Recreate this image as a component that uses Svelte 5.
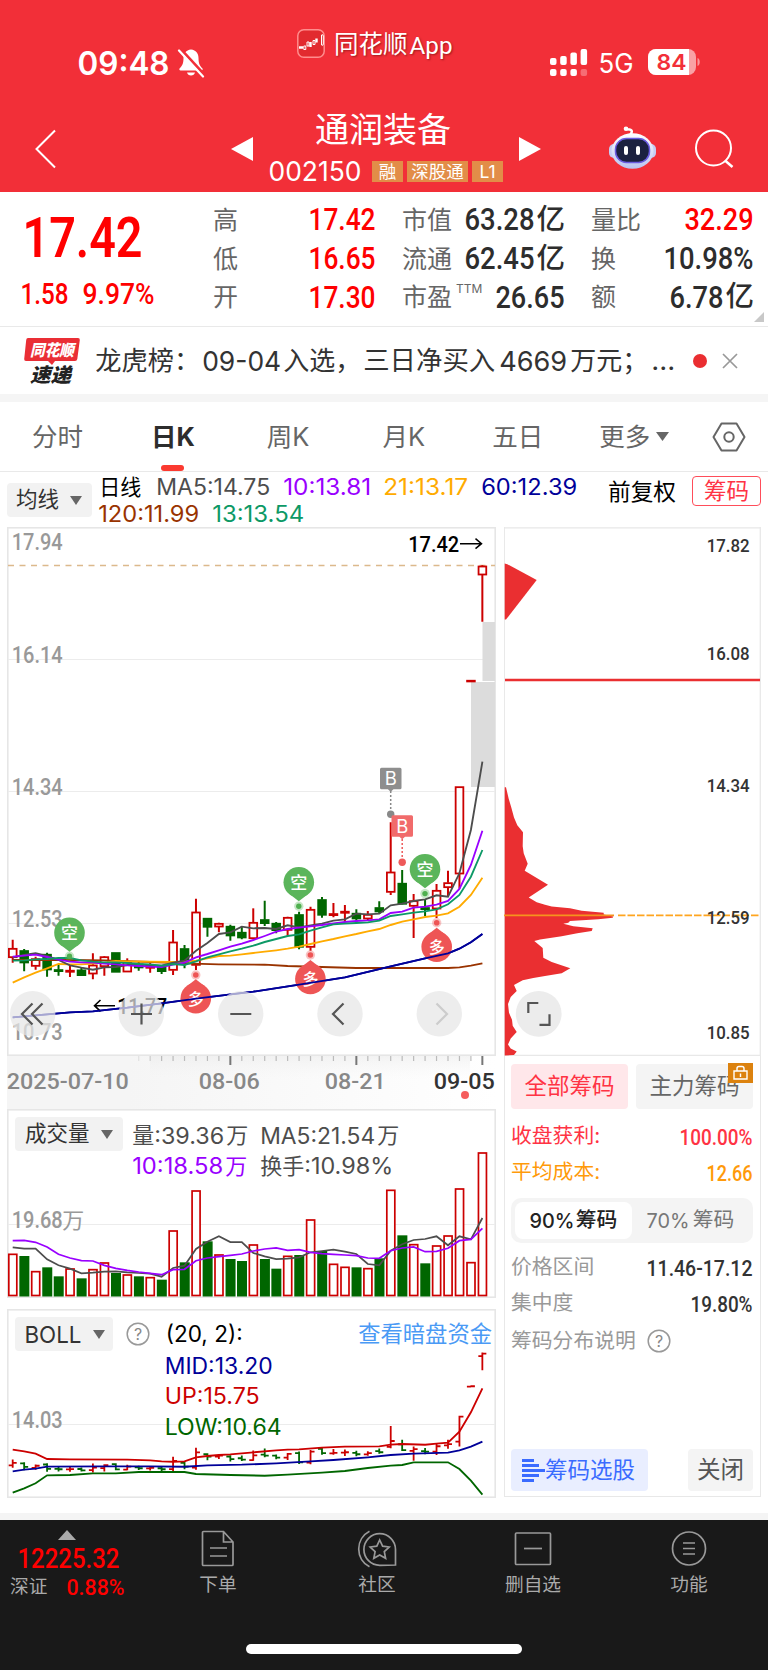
<script>
	const red = "#cc0000";
	const green = "#006600";

	const gap = 11.455;
	const x = i => 12.7 + gap * i;

	// [up?, high, body top, body bottom, low] in thirds of a pixel below y = 740
	const candles = [
		[1, 599, 625, 653, 668], [0, 627, 632, 667, 694], [1, 650, 656, 679, 689], [0, 638, 643, 688, 710],
		[0, 675, 689, 693, 707], [1, 677, 691, 695, 711], [0, 683, 690, 705, 708], [1, 640, 675, 702, 718],
		[1, 648, 650, 680, 707], [0, 638, 638, 695, 695], [1, 655, 665, 696, 696], [0, 665, 672, 682, 692],
		[1, 668, 678, 683, 698], [0, 675, 682, 693, 702], [1, 570, 606, 691, 705], [0, 615, 626, 665, 685],
		[1, 476, 516, 676, 690], [0, 534, 535, 560, 590], [1, 548, 550, 561, 577], [0, 554, 559, 586, 602],
		[0, 558, 577, 592, 598], [1, 505, 547, 596, 596], [0, 482, 539, 549, 558], [0, 546, 550, 570, 580],
		[1, 530, 532, 571, 587], [0, 515, 524, 620, 628], [1, 500, 508, 622, 632], [0, 471, 479, 524, 533],
		[1, 489, 521, 525, 532], [1, 495, 514, 518, 545], [0, 508, 520, 535, 548], [1, 513, 523, 537, 542],
		[0, 484, 503, 514, 522], [1, 247, 396, 457, 465], [0, 390, 430, 491, 493], [1, 462, 482, 499, 594],
		[0, 478, 503, 507, 528], [1, 432, 451, 507, 534], [1, 392, 428, 443, 470], [1, 140, 140, 402, 446],
		[1, -179, -179, -176, -176], [1, -524, -522, -495, -355]
	];
	const y = v => 740 + v / 3;
	const yBoll = v => 1403.3 + v * 0.0952;

	// a number is the next bar, a pair [i, v] jumps to bar i
	function path(list, fy) {
		let i = -1;
		return list.map(p => {
			const v = Array.isArray(p) ? p[1] : p;
			i = Array.isArray(p) ? p[0] : i + 1;
			return `${x(i).toFixed(1)},${fy(v).toFixed(1)}`;
		}).join(" ");
	}

	const averages = [
		{ color: "#993300", list: [660, [5, 660], [8, 661], [12, 666], [15, 670], [18, 673], [22, 674], [24, 678], [27, 681], [30, 684], [38, 684], 682, 677, 670] },
		{ color: "#000099", list: [832, [3, 823], [5, 817], [7, 814], [10, 803], [13, 790], [16, 776], [21, 755], [25, 734], [29, 712], [33, 679], [36, 655], [38, 640], 626, 607, 582] },
		{ color: "#ffab00", list: [728, 712, 698, 685, 672, 673, 673, 671, 668, 663, 664, [14, 666], 665, 662, 655, 648, 647, 643, 639, 635, 631, 626, 620, 612, 604, 597, 589, 582, 574, 567, 555, 545, 538, 531, 527, 520, 500, 465, 413] },
		{ color: "#4d4d4d", list: [652, 645, 640, 648, 660, 676, 683, 689, 682, 681, 675, 674, 676, 677, 668, 662, 632, 609, 582, 577, 560, 565, 564, 567, 556, 562, 556, 551, 542, 538, 521, 523, 521, 496, 491, 483, 478, 466, 470, 400, 270, 65] },
		{ color: "#9900ff", list: [650, 647, 644, 651, 659, 665, 667, 668, 671, 673, 676, 678, 680, 681, 674, 668, 652, 642, 631, 620, 611, 600, 588, 575, 567, 563, 559, 555, 550, 546, 543, 541, 538, 519, 515, 503, 500, 494, 483, 447, 375, 272] },
		{ color: "#0d9966", list: [662, 661, 658, 657, 654, 654, 661, 665, 667, 667, 669, 672, 673, 677, 672, 675, 664, 652, 643, 634, 626, 617, 606, 597, 588, 583, 572, 562, 553, 551, 549, 547, 542, 528, 523, 518, 514, 508, 493, 465, 410, 330] }
	];

	const yVol = v => 1045 + v / 3;
	const volumes = [628, 633, 680, 667, 694, 672, 700, 674, 654, 684, 690, 694, 698, 704, 558, 652, 438, 589, 630, 642, 648, 600, 642, 671, 634, 630, 525, 618, 658, 667, 667, 671, 640, 436, 571, 599, 655, 603, 573, 432, 653, 324];
	const volumeLines = [
		{ color: "#4d4d4d", list: [607, 611, 611, 643, 661, 671, 685, 683, 680, 679, 682, 684, 686, 695, 669, 662, 612, 590, 574, 591, 591, 624, 634, 642, 641, 637, 622, 618, 614, 620, 627, 657, 661, 617, 598, 585, 582, 574, 601, 574, 583, 519] },
		{ color: "#9900ff", list: [587, 586, 592, 606, 628, 639, 647, 648, 661, 670, 676, 681, 685, 689, 674, 673, 647, 639, 635, 631, 627, 618, 612, 609, 616, 614, 622, 626, 628, 630, 632, 639, 640, 617, 609, 606, 620, 619, 610, 587, 583, 550] }
	];

	const yBand = v => 1300 + v / 3;
	const bands = [
		{ color: "#cc0000", list: [449, 454, 461, 477, [5, 478], [10, 479], [12, 481], 484, 485, 484, 472, 468, 465, 463, 460, 457, [23, 451], 449, 448, [27, 443], [29, 440], [32, 439], 434, 432, [36, 434], 431, 428, 395, 337, 265] },
		{ color: "#000099", list: [514, 509, 506, 500, [8, 499], [12, 499], [15, 500], [17, 496], [20, 494], [23, 490], [26, 484], [28, 480], [31, 472], [33, 465], [35, 461], [38, 458], 451, 440, 425] },
		{ color: "#006600", list: [578, 565, 550, 526, [5, 525], [7, 520], [9, 520], [11, 516], [15, 516], 522, [19, 525], [22, 527], [24, 524], [27, 518], [29, 513], [31, 504], [33, 497], 495, 487, [38, 487], 507, 542, 584] }
	];

	// chip distribution outline, [x, y]
	const chips = [[44, 762], [48, 762], [56, 795], [64, 820], [72, 848], [82, 870], [99, 890], [98, 930], [101, 950], [113, 980], [104, 1000], [174, 1040], [116, 1076], [140, 1090], [165, 1097], [185, 1102], [240, 1107], [275, 1114], [341, 1120], [341, 1125], [370, 1130], [368, 1134], [325, 1138], [240, 1143], [235, 1148], [220, 1151], [250, 1158], [308, 1164], [305, 1172], [262, 1178], [215, 1187], [150, 1196], [133, 1200], [158, 1220], [160, 1248], [185, 1260], [241, 1278], [215, 1292], [165, 1300], [130, 1306], [98, 1312], [72, 1326], [80, 1343], [62, 1360], [54, 1380], [57, 1405], [66, 1425], [68, 1442], [80, 1460], [62, 1478], [54, 1495], [62, 1507], [80, 1515], [72, 1525], [44, 1527]];
	const chipTop = [[44, 124], [52, 126], [140, 171], [48, 284], [44, 284]];
	const outline = list => list.map(([a, b]) => `${(490 + a / 3).toFixed(1)},${(520 + b / 2.851).toFixed(1)}`).join(" ");

	const shorts = [[69.5, 932.7, 956.2], [298.8, 882.3, 906.3], [425, 869.3, 893.6]];
	const longs = [[195.8, 998.3, 975], [310.4, 979, 955], [436.7, 946.7, 922.8]];
	const priceLabels = [["17.94", 550], ["16.14", 663], ["14.34", 795], ["12.53", 927], ["10.73", 1040]];
	const chipLabels = [["17.82", 552.3], ["16.08", 659.5], ["14.34", 791.5], ["12.59", 923.5], ["10.85", 1038.5]];

	const quotes = [
		[["高", "17.42", 67, "up"], ["低", "16.65", 67, "up"], ["开", "17.30", 67, "up"]],
		[["市值", "63.28", 70, "", "亿"], ["流通", "62.45", 70, "", "亿"], ["市盈", "26.65", 69, "", "", "TTM"]],
		[["量比", "32.29", 69, "up"], ["换", "10.98%", 90, ""], ["额", "6.78", 54, "", "亿"]]
	];
	const tabs = [["分时", 32], ["日K", 68], ["周K", 72], ["月K", 73], ["五日", 67], ["更多", 56]];
</script>

{#snippet fit(text, width, height, cls = "")}
	<svg class="fit {cls}" {width} {height}>
		<text x="-0.5" y={height} font-size={height / 0.715} textLength={width} lengthAdjust="spacingAndGlyphs">{text}</text>
	</svg>
{/snippet}

{#snippet label(text, lx, ly, width, size, fill, cls = "din")}
	<text class={cls} x={lx - 0.8} y={ly} font-size={size} textLength={width} lengthAdjust="spacingAndGlyphs" {fill}>{text}</text>
{/snippet}

{#snippet help()}
	<svg class="help" width="24" height="24" viewBox="0 0 24 24">
		<circle cx="12" cy="12" r="10.8" fill="none" stroke="#999" stroke-width="1.5" />
		<text x="12" y="17.6" text-anchor="middle" font-size="16" fill="#888">?</text>
	</svg>
{/snippet}

<main>
	<header>
		<div class="status">
			<div class="time">{@render fit("09:48", 92, 23.5, "semi")}</div>
			<svg class="bell" width="28" height="30" viewBox="0 0 28 30">
				<path d="M14 1.5c-5 .6-7.5 4-7.5 8.500c0 6-1.500 8-3.800 10.300c-.8.9-.3 2.200.9 2.200h20.800c1.200 0 1.700-1.300.9-2.200c-2.300-2.300-3.800-4.300-3.800-10.300c0-4.500-2.500-7.900-7.500-8.500z" fill="#fff" />
				<path d="M10 24.500h8c-.5 2-2 3-4 3s-3.500-1-4-3z" fill="#fff" />
				<path d="M3.500 1l24 26" stroke="#f22f38" stroke-width="3" />
				<path d="M2 2.500l24 26" stroke="#fff" stroke-width="2.200" stroke-linecap="round" />
			</svg>
			<svg class="app" width="28" height="29" viewBox="0 0 28 29">
				<rect x=".8" y=".8" width="26.400" height="27.400" rx="6" fill="#e22a2f" stroke="#ff8d8d" stroke-width="1.500" />
				<path d="M2 18.500h4M13.500 13v5M19.500 9.500v4" stroke="#fff" stroke-width="2.400" />
				<path d="M6.800 17h2v3.500h-2zM10 13h2v4h-2zM16 11.500h2v4h-2zM24.500 6q1.800-1 1.800 1v8q0 2-1.800 1z" fill="none" stroke="#fff" stroke-width="1" />
			</svg>
			<div class="brand">同花顺{@render fit("App", 43, 17.5)}</div>
			<svg class="signal" width="38" height="28" viewBox="0 0 38 28" fill="#fff">
				<rect x="0" y="9" width="6.500" height="7" rx="2" /><rect x="10.200" y="7" width="6.500" height="9" rx="2" />
				<rect x="20.400" y="3.500" width="6.500" height="12.500" rx="2" /><rect x="30.600" y="0" width="6.500" height="16" rx="2" />
				<rect x="0" y="20" width="6.500" height="7" rx="2" /><rect x="10.200" y="20" width="6.500" height="7" rx="2" />
				<rect x="20.400" y="20" width="6.500" height="7" rx="2" /><rect x="30.600" y="20" width="6.500" height="7" rx="2" opacity=".3" />
			</svg>
			<div class="net">{@render fit("5G", 35, 19.5, "sans")}</div>
			<svg class="battery" width="53" height="27" viewBox="0 0 53 27">
				<rect width="48" height="26" rx="8" fill="#fff" opacity=".55" />
				<path d="M8 0h33v26h-33a8 8 0 0 1-8-8v-10a8 8 0 0 1 8-8z" fill="#fff" />
				<path d="M49.500 9c3 1 3 7 0 8z" fill="#fff" opacity=".5" />
				<text x="8.500" y="20.800" font-size="21.500" font-weight="600" textLength="30" lengthAdjust="spacingAndGlyphs" fill="#f22f38">84</text>
			</svg>
		</div>
		<div class="nav">
			<svg class="back" width="22" height="40" viewBox="0 0 22 40"><path d="M20 1.500L1.500 20L20 38.500" fill="none" stroke="#fff" stroke-width="2" /></svg>
			<svg class="prev" width="22" height="26" viewBox="0 0 22 26"><path d="M0 13L22 1v24z" fill="#fff" /></svg>
			<div class="title">
				<h1>通润装备</h1>
				<div class="code">
					{@render fit("002150", 93, 19, "sans")}
					<span class="tag one">融</span><span class="tag three">深股通</span><span class="tag one">L1</span>
				</div>
			</div>
			<svg class="next" width="22" height="26" viewBox="0 0 22 26"><path d="M22 13L0 1v24z" fill="#fff" /></svg>
			<svg class="robot" width="47" height="43" viewBox="0 0 47 43">
				<defs>
					<linearGradient id="shell" x1="0" y1="0" x2="0" y2="1"><stop offset="0" stop-color="#fff" /><stop offset="1" stop-color="#b9c3f0" /></linearGradient>
				</defs>
				<path d="M21 9c2-2 3-5-.5-5.500c-3 0-4-.5-3.500-1.500" fill="none" stroke="#fff" stroke-width="2.500" />
				<circle cx="17" cy="2.800" r="2.300" fill="#fff" />
				<rect x="0" y="18" width="47" height="14" rx="5" fill="#c5cdf3" />
				<ellipse cx="23.500" cy="25" rx="21" ry="17.800" fill="url(#shell)" />
				<rect x="6.500" y="12.500" width="34" height="24" rx="11" fill="#1b2140" stroke="#6a5be0" stroke-width="1.500" />
				<rect x="15" y="20" width="4" height="9" rx="2" fill="#fff" /><rect x="27" y="20" width="4" height="9" rx="2" fill="#fff" />
			</svg>
			<svg class="search" width="41" height="41" viewBox="0 0 41 41" fill="none" stroke="#fff" stroke-width="2"><circle cx="19.500" cy="19" r="17.500" /><path d="M31 31.500L38.500 38" stroke-width="2.500" /></svg>
		</div>
	</header>

	<section class="quote">
		<div class="last">
			{@render fit("17.42", 120, 39.5, "up big")}
			<div class="change">{@render fit("1.58", 48, 21, "up")}{@render fit("9.97%", 72, 21, "up")}</div>
		</div>
		{#each quotes as column}
			<div class="column">
				{#each column as [name, value, width, cls, unit, sup]}
					<div class="row">
						<span>{name}{#if sup}<sup>{sup}</sup>{/if}</span>
						<b>{@render fit(value, width, 22, cls)}{#if unit}<i>{unit}</i>{/if}</b>
					</div>
				{/each}
			</div>
		{/each}
		<svg class="corner" width="10" height="10"><path d="M10 0v10H0z" fill="#c8c8c8" /></svg>
	</section>

	<section class="news">
		<svg class="logo" width="56" height="47" viewBox="24 336 56 47">
			<path d="M28 337h50q2 0 1.800 2l-2.500 19q-.3 2-2.300 2h-20l-3 4l-4-4h-22q-2 0-1.800-2l2-19q.2-2 1.800-2z" fill="#ea2e35" />
			<text x="30" y="355" font-size="16" font-weight="900" font-style="italic" textLength="44" lengthAdjust="spacingAndGlyphs" fill="#fff">同花顺</text>
			<text x="30" y="380.500" font-size="19.500" font-weight="900" font-style="italic" textLength="41" lengthAdjust="spacingAndGlyphs" fill="#222">速递</text>
		</svg>
		<svg class="headline" width="580" height="40" viewBox="96 340 580 40">
			{@render label("龙虎榜：", 96, 369, 105, 26, "#333", "cjk")}
			{@render label("09-04", 203, 369.5, 79, 27, "#333", "sf")}
			{@render label("入选，", 284, 369, 78, 26, "#333", "cjk")}
			{@render label("三日净买入", 364, 369, 132, 26, "#333", "cjk")}
			{@render label("4669", 500, 369.5, 68, 27, "#333", "sf")}
			{@render label("万元；", 571, 369, 78, 26, "#333", "cjk")}
			{@render label("...", 652, 369, 24, 27, "#333", "sf")}
		</svg>
		<span class="dot"></span>
		<svg class="close" width="16" height="16" viewBox="0 0 16 16"><path d="M1 1l14 14M15 1L1 15" stroke="#999" stroke-width="1.700" /></svg>
	</section>

	<nav class="tabs">
		{#each tabs as [name, space]}
			<span class:active={name === "日K"} style="margin-left: {space}px">{name}</span>
		{/each}
		<svg class="caret" width="13" height="9"><path d="M0 0h13l-6.500 9z" fill="#666" /></svg>
		<svg class="gear" width="34" height="30" viewBox="0 0 34 30" fill="none" stroke="#666" stroke-width="2"><path d="M9.500 1.500h15L32.500 15L24.500 28.500h-15L1.500 15z" stroke-linejoin="round" /><circle cx="17" cy="15" r="4.700" /></svg>
	</nav>

	<section class="legend">
		<button class="pick">均线<svg width="12" height="9"><path d="M0 0h12l-6 9z" fill="#666" /></svg></button>
		<svg class="means" width="480" height="55" viewBox="100 472 480 55">
			{@render label("日线", 100, 495, 42, 21.5, "#000", "cjk")}
			{@render label("MA5:14.75", 157, 494.5, 114, 22.5, "#4d4d4d", "sf")}
			{@render label("10:13.81", 284, 494.5, 88, 22.5, "#9900ff", "sf")}
			{@render label("21:13.17", 384, 494.5, 85, 22.5, "#ffab00", "sf")}
			{@render label("60:12.39", 482, 494.5, 96, 22.5, "#000099", "sf")}
			{@render label("120:11.99", 99, 521.5, 101, 22.5, "#993300", "sf")}
			{@render label("13:13.54", 213, 521.5, 92, 22.5, "#0d9966", "sf")}
		</svg>
		<span class="adjust">前复权</span>
		<span class="chip">筹码</span>
	</section>

	<section class="charts">
		<div class="left">
			<svg width="489" height="529" viewBox="7 527 489 529">
				<rect x="7.800" y="527.800" width="487.400" height="527.400" fill="#fff" stroke="#e6e6e6" stroke-width="1.600" />
				<path d="M8 659.500H495M8 791.500H495M8 923.500H495" stroke="#ececec" />
				<rect x="482.500" y="622" width="12.500" height="59" fill="#dcdcdc" />
				<rect x="471" y="682" width="24" height="105" fill="#dcdcdc" />
				<path d="M8 565.500H495" stroke="#dcb98c" stroke-width="1.300" stroke-dasharray="6 5.500" />
				{#each priceLabels as [text, ly]}
					{@render label(text, 12.500, ly, 51, 23.5, "#999")}
				{/each}
				{@render label("17.42", 409, 552, 51, 22.5, "#000")}
				<path d="M460 543.700h21M475.500 538.700l6 5l-6 5" fill="none" stroke="#000" stroke-width="1.500" />
				{#each candles as [up, high, top, bottom, low], i}
					<path d="M{x(i)} {y(high)}V{y(top)}M{x(i)} {y(bottom)}V{y(low)}" stroke={up ? red : green} stroke-width="2" />
					{#if up && bottom - top > 5}
						<rect x={x(i) - 3.800} y={y(top) + 0.5} width="7.700" height={(bottom - top) / 3 - 1} fill="#fff" stroke={red} stroke-width="1.800" />
					{:else}
						<rect x={x(i) - 4.700} y={y(top) - 0.5} width="9.500" height={(bottom - top) / 3 + 1.5} fill={up ? red : green} />
					{/if}
				{/each}
				{#each averages as line}
					<polyline points={path(line.list, y)} fill="none" stroke={line.color} stroke-width="1.850" />
				{/each}
				<path d="M115 1005.700H94M100.500 1000l-6 5.700l6 5.700" fill="none" stroke="#000" stroke-width="1.600" />
				{@render label("11.77", 118, 1014, 50, 22.5, "#000")}

				{#each shorts as [cx, cy, dot]}
					<circle {cx} cy={dot} r="4.700" fill="#5bb75b" opacity=".35" /><circle {cx} cy={dot} r="2.700" fill="#4fb04f" />
					<path d="M{cx - 9} {cy + 12}L{cx} {cy + 19}L{cx + 9} {cy + 12}z" fill="#5bb55b" />
					<circle {cx} {cy} r="15.300" fill="#5bb55b" />
					<text class="cjk" x={cx} y={cy + 6.3} font-size="17" font-weight="500" text-anchor="middle" fill="#fff">空</text>
				{/each}
				{#each longs as [cx, cy, dot]}
					<circle {cx} cy={dot} r="4.700" fill="#ee5555" opacity=".35" /><circle {cx} cy={dot} r="2.800" fill="#ee5555" />
					<path d="M{cx - 9} {cy - 12}L{cx} {cy - 19}L{cx + 9} {cy - 12}z" fill="#ee5555" />
					<circle {cx} {cy} r="15.300" fill="#ee5555" />
					<text class="cjk" x={cx} y={cy + 6.3} font-size="16" font-weight="500" text-anchor="middle" fill="#fff">多</text>
				{/each}
				<polyline points={path(averages[1].list, y)} fill="none" stroke="#000099" stroke-width="1.850" />

				<path d="M390.700 791v20" stroke="#888" stroke-width="1.500" stroke-dasharray="2 2" />
				<circle cx="390.700" cy="814.300" r="3.700" fill="#888" />
				<path d="M381.500 767.700h18.500a1.500 1.500 0 0 1 1.500 1.500v18.500a1.500 1.500 0 0 1-1.500 1.500h-6.500l-2.800 2.500l-2.800-2.500h-6.400a1.500 1.500 0 0 1-1.500-1.500v-18.500a1.500 1.500 0 0 1 1.500-1.500z" fill="#8e8e8e" />
				<text class="sf" x="390.700" y="785" font-size="18.500" text-anchor="middle" fill="#fff">B</text>
				<path d="M402.200 839v20" stroke="#ee5a5a" stroke-width="1.500" stroke-dasharray="2 2" />
				<circle cx="402.200" cy="862.300" r="3.700" fill="#ee5a5a" />
				<path d="M393 815.300h18.500a1.500 1.500 0 0 1 1.500 1.500v18.500a1.500 1.500 0 0 1-1.500 1.500h-6.500l-2.800 2.500l-2.800-2.500h-6.400a1.500 1.500 0 0 1-1.500-1.500v-18.500a1.500 1.500 0 0 1 1.500-1.500z" fill="#f16b6b" />
				<text class="sf" x="402.200" y="832.700" font-size="18.500" text-anchor="middle" fill="#fff">B</text>

				{#each [32.7, 141.3, 240.7, 340, 439.3] as cx}
					<circle {cx} cy="1013.800" r="22.700" fill="#e6e6e6" opacity=".72" />
				{/each}
				<g fill="none" stroke="#555" stroke-width="2.200">
					<path d="M32.500 1003.500L22 1014L32.500 1024.500M42.500 1003.500L32 1014L42.500 1024.500" />
					<path d="M131 1014h21M141.500 1003.500v21M230.300 1014h21" />
					<path d="M343.500 1003.500L333 1014L343.500 1024.500" />
					<path d="M436.500 1003.500L447 1014L436.500 1024.500" stroke="#ccc" />
				</g>
			</svg>

			<svg width="489" height="53" viewBox="7 1056 489 53">
				<defs>
					<linearGradient id="fade"><stop offset=".25" stop-color="#f5f5f5" /><stop offset="1" stop-color="#fff" /></linearGradient>
					<linearGradient id="shade" x1="0" x2="0" y1="0" y2="1"><stop offset="0" stop-color="#e9e9e9" /><stop offset="1" stop-color="#f5f5f5" stop-opacity="0" /></linearGradient>
				</defs>
				<rect x="7" y="1056" width="489" height="53" fill="url(#fade)" />
				<rect x="150" y="1056" width="320" height="24" fill="url(#shade)" opacity=".5" />
				{#each candles as _, i}
					{#if i > 10}
						<path d="M{x(i)} 1056v{i % 11 === 8 ? 9 : 5}" stroke={i % 11 === 8 ? "#777" : "#bbb"} stroke-width={i % 11 === 8 ? 2 : 1.2} opacity={Math.min(1, (i - 10) / 3)} />
					{/if}
				{/each}
				{@render label("2025-07-10", 7.500, 1089, 122, 22, "#888")}
				{@render label("08-06", 199.500, 1089, 61, 22, "#888")}
				{@render label("08-21", 325.500, 1089, 61, 22, "#888")}
				{@render label("09-05", 434.500, 1089, 61, 22, "#333")}
				<circle cx="465" cy="1095" r="4" fill="#f55d5d" />
			</svg>

			<div class="panel">
				<svg width="489" height="189" viewBox="7 1109 489 189">
					<rect x="7.800" y="1109.800" width="487.400" height="187.400" fill="#fff" stroke="#e6e6e6" stroke-width="1.600" />
					<path d="M8 1224.500H495" stroke="#ececec" />
					{@render label("19.68", 12.500, 1228, 51, 23, "#999")}
					{@render label("万", 63, 1228, 22, 22, "#999", "cjk")}
					{@render label("量", 133, 1143, 22, 22, "#4d4d4d", "cjk")}
					{@render label(":39.36", 155, 1143.5, 70, 22.5, "#4d4d4d", "sf")}
					{@render label("万", 227, 1143, 22, 22, "#4d4d4d", "cjk")}
					{@render label("MA5:21.54", 261, 1143.5, 115, 22.5, "#4d4d4d", "sf")}
					{@render label("万", 378, 1143, 22, 22, "#4d4d4d", "cjk")}
					{@render label("10:18.58", 133, 1174, 91, 22.5, "#9900ff", "sf")}
					{@render label("万", 226, 1173.5, 22, 22, "#9900ff", "cjk")}
					{@render label("换手", 261, 1173.5, 44, 22, "#4d4d4d", "cjk")}
					{@render label(":10.98%", 305, 1174, 89, 22.5, "#4d4d4d", "sf")}
					{#each volumes as v, i}
						{#if candles[i][0]}
							<rect x={x(i) - 3.900} y={yVol(v)} width="8" height={1295.500 - yVol(v)} fill="#fff" stroke={red} stroke-width="1.700" />
						{:else}
							<rect x={x(i) - 4.800} y={yVol(v)} width="10" height={1296.500 - yVol(v)} fill={green} />
						{/if}
					{/each}
					{#each volumeLines as line}
						<polyline points={path(line.list, yVol)} fill="none" stroke={line.color} stroke-width="1.750" />
					{/each}
				</svg>
				<div class="tools"><button class="pick wide">成交量<svg width="12" height="9"><path d="M0 0h12l-6 9z" fill="#666" /></svg></button></div>
			</div>

			<div class="panel boll">
				<svg width="489" height="189" viewBox="7 1309 489 189">
					<rect x="7.800" y="1309.800" width="487.400" height="187.400" fill="#fff" stroke="#e6e6e6" stroke-width="1.600" />
					<path d="M8 1424.500H495" stroke="#ececec" />
					{@render label("14.03", 12.500, 1427.5, 51, 23, "#999")}
					{@render label("(20, 2):", 166.5, 1342, 77, 22.5, "#000", "sf")}
					{@render label("MID:13.20", 165.5, 1373.5, 108, 22.5, "#000099", "sf")}
					{@render label("UP:15.75", 165.5, 1404, 95, 22.5, "#cc0000", "sf")}
					{@render label("LOW:10.64", 165.5, 1434.5, 117, 22.5, "#006600", "sf")}
					{#each candles as [up, high, top, bottom, low], i}
						<path
							d="M{x(i)} {yBoll(high) - 0.8}V{yBoll(low) + 0.8}M{x(i) - 4} {yBoll(up ? bottom : top)}H{x(i)}M{x(i)} {yBoll(up ? top : bottom)}h4"
							fill="none" stroke={up ? red : green} stroke-width="1.800" />
					{/each}
					{#each bands as line}
						<polyline points={path(line.list, yBand)} fill="none" stroke={line.color} stroke-width="1.850" />
					{/each}
				</svg>
				<div class="tools">
					<button class="pick short">{@render fit("BOLL", 57, 16.5, "sans")}<svg width="12" height="9"><path d="M0 0h12l-6 9z" fill="#666" /></svg></button>
					{@render help()}
					<span class="link">查看暗盘资金</span>
				</div>
			</div>
		</div>

		<div class="right">
			<svg width="257" height="529" viewBox="504 527 257 529">
				<path d="M504 527.800H760.500M504 1055.300H760.500M504.300 527V1056M760.300 527V1056" stroke="#e8e8e8" stroke-width="1.300" />
				<polygon points={outline(chipTop)} fill="#ea2f31" />
				<polygon points={outline(chips)} fill="#ea2f31" />
				<path d="M505 680H760" stroke="#ea2f31" stroke-width="2.300" />
				<path d="M504 915.300H614" stroke="#f5931e" stroke-width="1.700" />
				<path d="M618 915.300H760" stroke="#ffa51f" stroke-width="1.700" stroke-dasharray="7.500 2" />
				{#each chipLabels as [text, ly]}
					{@render label(text, 707.500, ly, 43, 19, "#333")}
				{/each}
				<circle cx="538.700" cy="1013.800" r="22.900" fill="#ececec" />
				<path d="M528.300 1013v-10h10M539.500 1024.800h10v-10.500" fill="none" stroke="#555" stroke-width="2.200" />
			</svg>
			<div class="info">
				<div class="pair">
					<span class="all">全部筹码</span>
					<span class="major">主力筹码
						<svg class="lock" width="25" height="20" viewBox="0 0 25 20"><rect width="25" height="20" fill="#dc820f" /><path d="M6 8h13v8H6zM9 8V5.500q0-2 2-2h3q2 0 2 2V8M12.500 10.500v3.500" fill="none" stroke="#fff" stroke-width="1.400" /></svg>
					</span>
				</div>
				<div class="line profit"><span>收盘获利:</span>{@render fit("100.00%", 73, 15.5)}</div>
				<div class="line cost"><span>平均成本:</span>{@render fit("12.66", 46, 15.5)}</div>
				<div class="segment">
					<span class="on">{@render fit("90%", 45, 14.7, "sans")}筹码</span>
					<span>{@render fit("70%", 43, 14.7, "sans")}&#8202;筹码</span>
				</div>
				<div class="line"><span>价格区间</span>{@render fit("11.46-17.12", 106, 15.5)}</div>
				<div class="line"><span>集中度</span>{@render fit("19.80%", 62, 15.5)}</div>
				<div class="line note"><span>筹码分布说明</span>{@render help()}</div>
				<div class="actions">
					<span class="select"><svg width="23" height="23" viewBox="0 0 23 23"><path d="M0 1.500h12M0 6.500h17M0 11.500h23M0 16.500h17M0 21.500h12" stroke="#3a6bff" stroke-width="2.900" /></svg>筹码选股</span>
					<span class="shut">关闭</span>
				</div>
			</div>
		</div>
	</section>

	<footer>
		<div class="index">
			<svg class="rise" width="18" height="10"><path d="M9 0l9 10H0z" fill="#aaa" /></svg>
			{@render fit("12225.32", 102, 19.5, "up point")}
			<div class="pct"><span>深证</span>{@render fit("0.88%", 58, 16, "up")}</div>
		</div>
		<div class="item a">
			<svg width="36" height="38" viewBox="0 0 36 38"><path d="M4 1.500h19.500L33 12v22.500q0 1-1 1H3.500q-1 0-1-1v-32q0-1 1-1zM23.500 1.500V12H33M10 18h17M10 26h17" /></svg>
			<span>下单</span>
		</div>
		<div class="item b">
			<svg width="40" height="38" viewBox="0 0 40 38"><path d="M38.500 35V19.500a15.800 15.800 0 1 0-15.800 15.800zM12.500 1.300a20 20 0 0 0 0 35.500" /><path d="M22.700 10l2.900 6.200l6.600.8l-4.900 4.600l1.300 6.700l-5.900-3.300l-5.900 3.300l1.300-6.700l-4.900-4.600l6.600-.8z" /></svg>
			<span>社区</span>
		</div>
		<div class="item c">
			<svg width="38" height="38" viewBox="0 0 38 38"><rect x="1.500" y="3" width="35" height="31.500" rx="1" /><path d="M10 18.500h18" /></svg>
			<span>删自选</span>
		</div>
		<div class="item d">
			<svg width="38" height="38" viewBox="0 0 38 38"><circle cx="19" cy="18.500" r="16.500" /><path d="M13 13h12M13 18.500h12M13 24h12" /></svg>
			<span>功能</span>
		</div>
		<div class="home"></div>
	</footer>
</main>

<style>
	:global(body) {
		background: #fff;
	}

	main {
		width: 768px;
		height: 1670px;
		overflow: hidden;
		background: #fff;
		color: #333;
		font-family: Inter, "Noto Sans CJK SC", sans-serif;
		line-height: 1;
		white-space: nowrap;
	}

	svg {
		display: block;
		flex: none;
	}

	.fit {
		overflow: visible;
		font-family: Roboto, sans-serif;
		font-weight: 500;
		fill: currentColor;
	}

	.fit.big {
		font-weight: 600;
	}

	.din {
		font-family: Roboto, sans-serif;
		font-weight: 500;
	}

	.sf,
	.fit.sans {
		font-family: Inter, sans-serif;
		font-weight: 400;
	}

	.fit.semi {
		font-family: Inter, sans-serif;
		font-weight: 600;
	}

	.cjk {
		font-family: "Noto Sans CJK SC", sans-serif;
	}

	.up {
		color: #ff0000;
	}

	header {
		height: 192px;
		background: #f22f38;
		color: #fff;
	}

	.status {
		display: flex;
		align-items: flex-start;
		height: 105px;
	}

	.time {
		margin: 51px 0 0 78px;
	}

	.bell {
		margin: 48px 0 0 7px;
	}

	.app {
		margin: 29px 0 0 92px;
	}

	.brand {
		display: flex;
		align-items: center;
		gap: 2px;
		width: 118px;
		margin: 32px 0 0 9px;
		font-size: 24.5px;
		text-shadow: 1px 1px 2px rgba(80, 0, 0, 0.5);
	}

	.brand .fit {
		font-weight: 400;
	}

	.signal {
		margin: 49px 0 0 98px;
	}

	.net {
		margin: 53px 0 0 11px;
	}

	.battery {
		margin: 49px 0 0 14px;
	}

	.nav {
		display: flex;
		align-items: flex-start;
	}

	.back {
		margin: 24px 0 0 35px;
	}

	.prev {
		margin: 31px 0 0 174px;
	}

	.next {
		margin: 31px 0 0 0;
	}

	.title {
		width: 266px;
	}

	h1 {
		margin: 8px 0 0;
		padding-right: 6px;
		font-size: 34px;
		font-weight: 400;
		text-align: center;
	}

	.code {
		display: flex;
		align-items: center;
		gap: 4px;
		margin: 13.500px 0 0 16px;
	}

	.tag {
		height: 21px;
		background: #e28d48;
		font-size: 17.500px;
		line-height: 21px;
		text-align: center;
	}

	.tag.one {
		width: 31px;
	}

	.tag.three {
		width: 61px;
	}

	.code .fit {
		margin-right: 6px;
	}

	.robot {
		margin: 21px 0 0 68px;
	}

	.search {
		margin: 24px 0 0 38px;
	}

	.quote {
		display: grid;
		grid-template-columns: 187px 162px 162px 162px auto;
		column-gap: 27px;
		height: 134px;
		border-bottom: 1px solid #e9e9e9;
	}

	.last {
		padding: 25px 0 0 23px;
	}

	.change {
		display: flex;
		gap: 14px;
		margin: 26px 0 0 -2px;
	}

	.column {
		padding-top: 9px;
	}

	.row {
		display: flex;
		justify-content: space-between;
		align-items: center;
		height: 38.700px;
		margin-left: -1px;
		font-size: 25px;
		color: #666;
	}

	.row b {
		display: flex;
		align-items: center;
		margin-bottom: 2px;
		color: #2d2d2d;
	}

	.row b .up {
		color: #ff0000;
	}

	.row i {
		margin-left: 1px;
		font-size: 28.500px;
		font-style: normal;
		font-weight: 500;
	}

	.row sup {
		margin-left: 4px;
		font-size: 12px;
		vertical-align: 13px;
		line-height: 0;
	}

	.corner {
		margin: 120px 0 0 -27px;
	}

	.news {
		display: flex;
		align-items: center;
		height: 67px;
		border-bottom: 8px solid #f5f5f5;
	}

	.logo {
		margin-left: 24px;
		overflow: visible;
	}

	.headline {
		margin-left: 16px;
	}

	.dot {
		width: 14px;
		height: 14px;
		margin-left: 17px;
		border-radius: 50%;
		background: #ea2e31;
	}

	.close {
		margin-left: 15px;
	}

	.tabs {
		display: flex;
		align-items: center;
		height: 69px;
		border-bottom: 1px solid #e9e9e9;
		font-size: 25.500px;
		color: #666;
	}

	.tabs .active {
		position: relative;
		font-weight: 700;
		color: #2d2d2d;
	}

	.tabs .active::after {
		content: "";
		position: absolute;
		left: 10px;
		bottom: -22px;
		width: 23px;
		height: 6px;
		border-radius: 3px;
		background: #fb3a30;
	}

	.caret {
		margin-left: 6px;
	}

	.gear {
		margin-left: auto;
		margin-right: 22px;
	}

	.legend {
		display: flex;
		align-items: flex-start;
		height: 55px;
	}

	.pick {
		display: flex;
		align-items: center;
		gap: 11px;
		height: 34px;
		padding: 0 10px;
		border: 0;
		border-radius: 4px;
		background: #f2f2f2;
		color: #333;
		font-family: inherit;
		font-size: 21.500px;
		line-height: 1;
	}

	.legend .pick {
		width: 85px;
		margin: 11px 0 0 7px;
		padding-left: 9px;
	}

	.legend .means {
		margin-left: 8px;
		overflow: visible;
	}

	.adjust {
		width: 68px;
		margin: 9px 0 0 28px;
		font-size: 22.700px;
		color: #000;
	}

	.chip {
		width: 67px;
		margin: 4px 0 0 16px;
		border: 1.500px solid #ff4d5a;
		border-radius: 4px;
		font-size: 22.500px;
		line-height: 28px;
		text-align: center;
		color: #ff3344;
	}

	.charts {
		display: flex;
		gap: 8px;
		padding-left: 7px;
	}

	.panel {
		display: grid;
	}

	.panel > * {
		grid-area: 1 / 1;
	}

	.boll {
		margin-top: 11px;
	}

	.tools {
		display: flex;
		align-items: center;
		height: 34px;
		padding: 8px 4px 0 8px;
	}

	.tools .pick.wide {
		width: 108px;
	}

	.tools .pick.short {
		width: 98px;
	}

	.tools .help {
		margin-left: 13px;
	}

	.help {
		font-family: Inter, sans-serif;
	}

	.link {
		margin-left: auto;
		font-size: 22.300px;
		color: #4a9af5;
	}

	.right {
		width: 257px;
	}

	.info {
		box-sizing: border-box;
		height: 441px;
		padding: 8px 7px 0 6px;
		border: solid #e8e8e8;
		border-width: 0 1px 1px;
	}

	.pair,
	.actions {
		display: flex;
		justify-content: space-between;
	}

	.pair span {
		position: relative;
		width: 117px;
		height: 45px;
		border-radius: 4px;
		font-size: 22.500px;
		line-height: 44px;
		text-align: center;
	}

	.pair .all {
		background: #ffe7ea;
		color: #ff3344;
	}

	.pair .major {
		background: #f4f4f4;
		color: #666;
	}

	.lock {
		position: absolute;
		top: -1px;
		right: 0;
	}

	.line {
		display: flex;
		justify-content: space-between;
		align-items: center;
		height: 36.500px;
		font-size: 20.800px;
		color: #999;
	}

	.line .fit {
		color: #333;
	}

	.profit {
		margin-top: 9px;
	}

	.profit,
	.profit .fit {
		color: #ff3344;
	}

	.cost,
	.cost .fit {
		color: #ff9a0a;
	}

	.segment {
		display: flex;
		box-sizing: border-box;
		height: 45px;
		margin: 7px 0 6px;
		padding: 4px;
		border-radius: 10px;
		background: #f4f4f4;
		font-size: 20.800px;
		color: #777;
	}

	.segment span {
		display: flex;
		align-items: center;
		justify-content: center;
		gap: 1px;
		flex: 1;
		border-radius: 8px;
	}

	.segment .on {
		background: #fff;
		color: #222;
		font-weight: 500;
	}

	.segment .on .fit {
		font-weight: 500;
	}

	.note {
		justify-content: flex-start;
		gap: 11px;
		margin-top: 1px;
	}

	.actions {
		margin-top: 89.500px;
	}

	.select,
	.shut {
		display: flex;
		align-items: center;
		height: 42px;
		border-radius: 4px;
		font-size: 22.500px;
	}

	.select {
		width: 126px;
		padding-left: 11px;
		background: #e9eeff;
		color: #3a6bff;
	}

	.shut {
		justify-content: center;
		width: 65px;
		background: #f4f4f4;
		color: #555;
		font-size: 23.500px;
	}

	footer {
		display: grid;
		grid-template-columns: 150px 136px 182px 130px 182px;
		grid-template-rows: 124px 10px;
		height: 150px;
		margin-top: 15px;
		border-top: 7px solid #f4f4f4;
		background: #191919;
		color: #aaa;
		font-size: 18.700px;
	}

	.index {
		padding-left: 10px;
	}

	.rise {
		margin: 10px 0 0 48px;
	}

	.point {
		margin: 8px 0 0 8px;
	}

	.pct {
		display: flex;
		align-items: center;
		gap: 20px;
		margin-top: 10px;
	}

	.item {
		display: flex;
		flex-direction: column;
		align-items: center;
		gap: 8px;
		padding-top: 10px;
	}

	.item svg {
		fill: none;
		stroke: #999;
		stroke-width: 1.700;
	}

	.home {
		grid-column: 1 / -1;
		justify-self: start;
		width: 276px;
		height: 10px;
		margin-left: 246px;
		border-radius: 5px;
		background: #fff;
	}
</style>
